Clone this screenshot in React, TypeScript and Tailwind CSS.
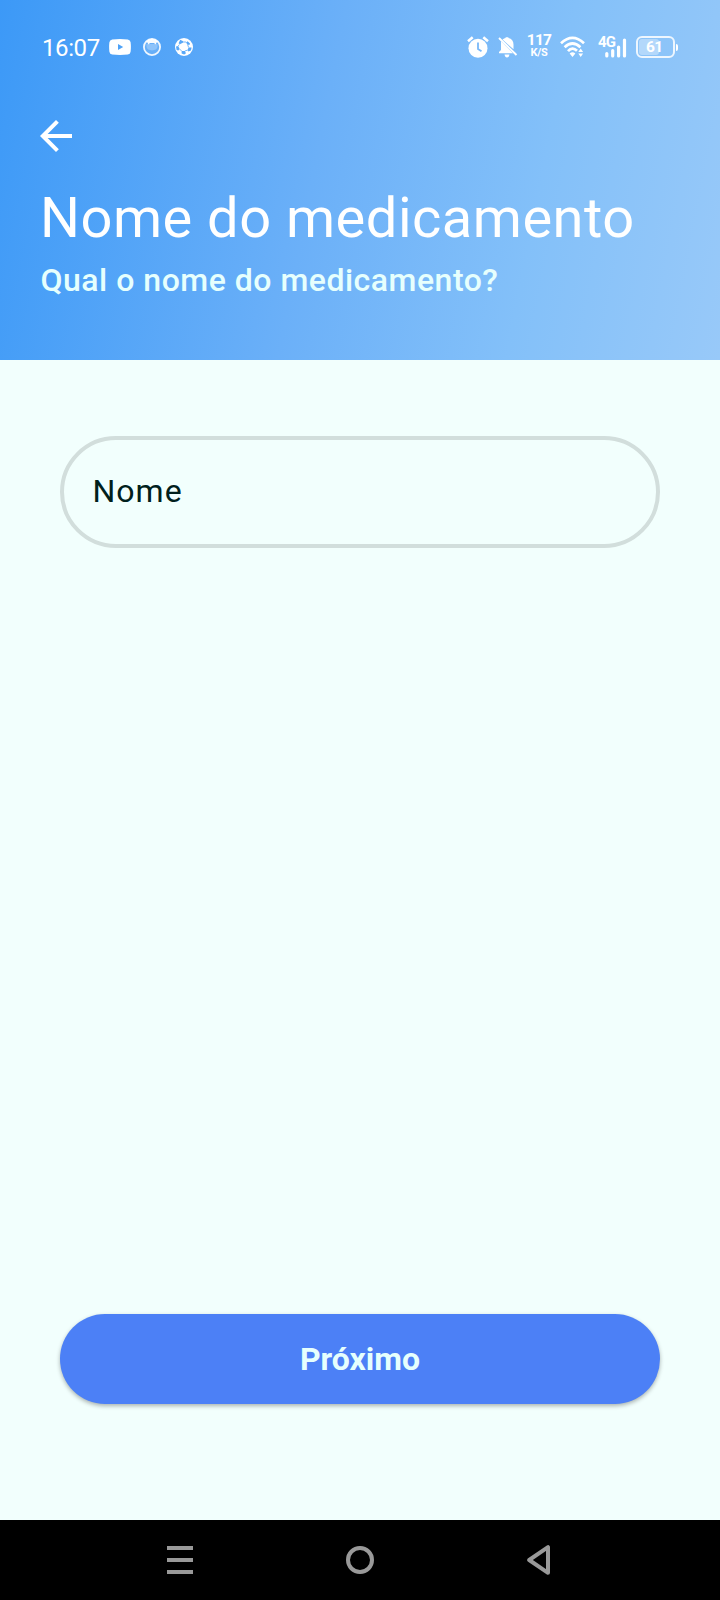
function Notifications() {
  return (
    <div className="ml-[9px] flex items-center gap-3">
      <svg width="22" height="16" viewBox="0 0 22 16">
        <path fillRule="evenodd" fill="#fff" d="M3.2.4Q11-.4 18.800.4Q21.300.8 21.600 3.200Q22.200 8 21.600 12.800Q21.300 15.200 18.800 15.600Q11 16.400 3.200 15.600Q.7 15.200.4 12.800Q-.2 8 .4 3.200Q.7.8 3.200.4ZM9 5V11L14.200 8Z" />
      </svg>
      <svg width="18" height="18" viewBox="0 0 18 18">
        <circle cx="9" cy="9" r="8.100" fill="#fff" fillOpacity=".12" stroke="#fff" strokeOpacity=".9" strokeWidth="1.800" />
        <path fill="#fff" fillOpacity=".95" d="M2.600 4Q9-2.500 15.400 4L13.600 4.500 12.600 6.500 11 5H7L5.400 6.500 4.400 4.500Z" />
        <path fill="#fff" fillOpacity=".25" d="M3.500 6H14.500V9Q14 12 9 12.500Q4 12 3.500 9Z" />
      </svg>
      <svg className="ml-0.5" width="18" height="18" viewBox="0 0 18 18">
        <circle cx="9" cy="9" r="9" fill="#fff" />
        <g fill="#59a8f8">
          <path d="M5.200 1.800 8.200 3.200V4.600L5 6.200 3.600 5.200Z" />
          <path d="M12.600 3.200 15 5.400 14.400 7 12.400 6.400 11 4.600Z" />
          <path d="M1 8.400 3.200 8 4.600 10.800 3.400 12.600 1.600 12Z" />
          <path d="M13.600 9.400 16.600 9.600 16 12.400 13.400 13.600 12.400 12.200Z" />
          <path d="M6.600 13 9.800 13 11 15.200 9.200 16.600 6.600 15.600Z" />
        </g>
        <path d="M8.200 4H11M4.400 6.500 3.200 8M12.600 6.500 13.600 9.400M4.600 11 6.600 13M12.400 12.200 9.800 13" stroke="#59a8f8" strokeWidth=".8" fill="none" />
      </svg>
    </div>
  );
}

function SystemIcons() {
  return (
    <div className="flex items-center text-white">
      <svg width="22" height="22" viewBox="0 0 22 22">
        <circle cx="11" cy="12.300" r="9.500" fill="#fff" />
        <path d="M1 5.200 5.700 1.300M21 5.200 16.300 1.300" stroke="#fff" strokeWidth="2.600" fill="none" />
        <path d="M11 6.500V13L14.500 15.300" stroke="#78b8f9" strokeWidth="1.800" fill="none" />
      </svg>
      <svg className="ml-[9px]" width="20" height="22" viewBox="0 0 20 22">
        <path fill="#fff" d="M4.500 3.600Q6 2.200 7.600 1.900V1.200H10.400V1.900Q15.500 3 15.500 8.500V13.300ZM3 5.200 15 17.300H1V16L3 14ZM6.500 18.500H11.500Q11 21.500 9 21.500Q7 21.500 6.500 18.500Z" />
        <path d="M1 2 18.500 19" stroke="#fff" strokeWidth="1.900" />
      </svg>
      <div className="ml-[9px] flex w-6 -translate-y-px flex-col items-center font-bold">
        <span className="text-[15.500px] leading-[13px] tracking-[-0.7px]">117</span>
        <span className="text-[11px] leading-[11px] tracking-[-0.2px]">K/S</span>
      </div>
      <svg className="ml-[9px]" width="26" height="22" viewBox="0 0 26 22">
        <g fill="none" stroke="#fff" strokeWidth="2.700">
          <path d="M1 7.200Q12.500-3.400 24 7.200" />
          <path d="M4.600 11.200Q12.500 3.800 20.400 11.200" />
          <path d="M8 15.200Q12.500 10.200 17 14.800" />
        </g>
        <path fill="#fff" d="M9.600 17.500Q12.500 15 15.400 17.500L12.500 21ZM18.300 16 20.700 12.400 23.100 16ZM18.300 17.400 20.700 21 23.100 17.400Z" />
      </svg>
      <div className="relative ml-3 h-[22px] w-[29px]">
        <span className="absolute -top-px left-0 text-[15px] font-bold leading-[14px] tracking-[-0.9px]">4G</span>
        <svg className="absolute left-[7px] top-[2px]" width="22" height="20" viewBox="0 0 22 20">
          <path d="M1.800 15.500V18M7.700 12.500V18M13.600 9V18M19.500 2V18" stroke="#fff" strokeWidth="3.200" strokeLinecap="round" />
        </svg>
      </div>
      <div className="ml-[9px] flex items-center gap-px">
        <div className="flex h-[22px] w-[39px] rounded-[6px] border-2 border-white/85 p-px">
          <div className="relative h-full w-[20px] rounded-[3px] bg-white/35">
            <span className="absolute left-[7px] top-0 text-[15.500px] font-bold leading-[16px] tracking-[-0.7px]">61</span>
          </div>
        </div>
        <div className="h-[7px] w-[2px] rounded-r bg-white" />
      </div>
    </div>
  );
}

export default function App() {
  return (
    <div className="flex h-[1600px] w-[720px] flex-col bg-[#f2fffd] font-['Roboto',sans-serif]">
      <header className="flex h-[360px] flex-col bg-[linear-gradient(101deg,#3c99f7_0%,#6bb0f8_44%,#83c0f9_73%,#98c9f9_100%)]">
        <div className="flex h-[94px] items-center justify-between pl-[42px] pr-[42px]">
          <div className="flex items-center">
            <span className="w-[58px] whitespace-nowrap pt-0.5 text-[24px] leading-7 tracking-[-0.4px] text-white">16:07</span>
            <Notifications />
          </div>
          <SystemIcons />
        </div>
        <button aria-label="Voltar" className="ml-8 mt-[18px] flex size-12 items-center justify-center">
          <svg width="48" height="48" viewBox="0 0 24 24" fill="#fff">
            <path d="M20 11H7.830l5.590-5.590L12 4l-8 8 8 8 1.410-1.410L7.830 13H20z" />
          </svg>
        </button>
        <h1 className="ml-10 mt-[26px] whitespace-nowrap text-[56px] leading-[64px] tracking-[0.5px] text-white">Nome do medicamento</h1>
        <p className="ml-[40.500px] mt-[10px] whitespace-nowrap text-[32px] font-medium leading-[40px] tracking-[0.5px] text-[#e6fffd]">Qual o nome do medicamento?</p>
      </header>
      <main className="flex flex-1 flex-col justify-between px-[60px] pb-[116px] pt-[76px]">
        <input
          placeholder="Nome"
          className="h-[112px] w-full rounded-full border-4 border-[#d2dedc] bg-transparent pl-[28.500px] pr-7 pb-0.5 text-[32px] tracking-[1px] outline-none placeholder:text-[#00201c]"
        />
        <button className="h-[90px] w-full rounded-full bg-[#4c80f6] text-[32px] font-bold text-[#e6fffd] shadow-[0_2px_4px_rgba(0,0,0,0.3)]">Próximo</button>
      </main>
      <nav className="flex h-20 items-center justify-between bg-black pl-[167px] pr-[169px]">
        <svg width="26" height="28" viewBox="0 0 26 28"><path d="M0 2H26M0 14H26M0 26H26" stroke="#999" strokeWidth="4" /></svg>
        <svg width="28" height="28" viewBox="0 0 28 28"><circle cx="14" cy="14" r="12" fill="none" stroke="#999" strokeWidth="4" /></svg>
        <svg width="24" height="30" viewBox="0 0 24 30"><path d="M21 2.200V27.800L2.200 15Z" fill="none" stroke="#999" strokeWidth="4" strokeLinejoin="round" /></svg>
      </nav>
    </div>
  );
}
